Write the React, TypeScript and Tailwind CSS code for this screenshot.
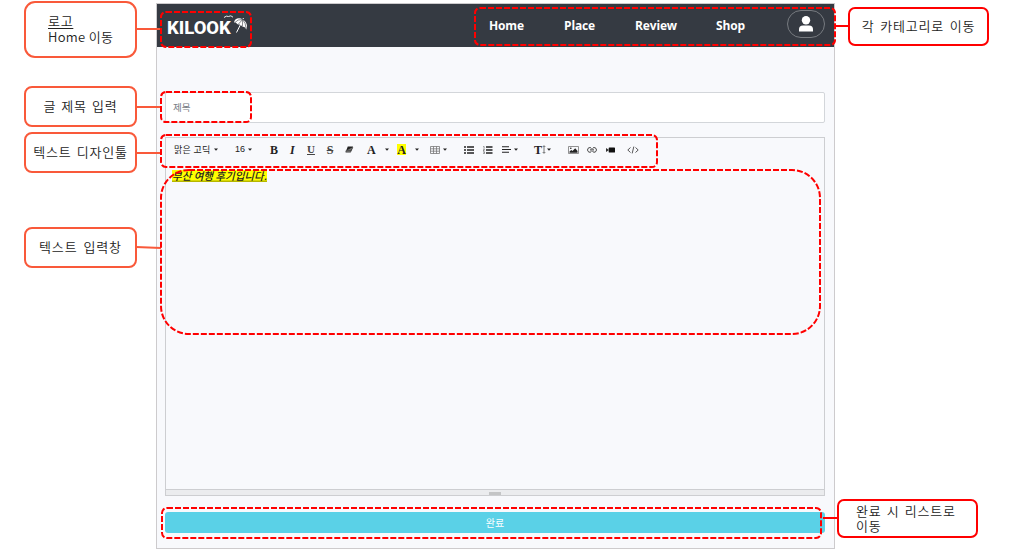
import type { ReactNode } from 'react';

const korean = "font-['Noto_Sans_CJK_KR',sans-serif]";

function Slot({ className, children }: { className: string; children: ReactNode }) {
  return <div className={`flex h-4 shrink-0 items-center ${className}`}>{children}</div>;
}

function Caret() {
  return (
    <svg className="shrink-0" width="4" height="3" viewBox="0 0 4 3">
      <path d="M0 .4h4L2 2.8z" fill="#222" />
    </svg>
  );
}

function Callout({ className, children }: { className: string; children: ReactNode }) {
  return (
    <div className={`absolute border-2 bg-white text-[13px] leading-4 font-[350] whitespace-nowrap text-[#222] ${className}`}>
      {children}
    </div>
  );
}

function Toolbar() {
  return (
    <div className="flex h-[23px] items-center pl-2 text-[#222]">
      <Slot className="w-[40px]"><span className="text-[9px] tracking-[0.3px] whitespace-nowrap">맑은 고딕</span></Slot>
      <Slot className="w-[21px]"><Caret /></Slot>
      <Slot className="w-[13px]"><span className="font-['Liberation_Sans',sans-serif] text-[9px]">16</span></Slot>
      <Slot className="w-[22px]"><Caret /></Slot>
      <Slot className="w-5 font-['Liberation_Serif',serif] text-[12px] font-bold">B</Slot>
      <Slot className="w-[17px] font-['Liberation_Serif',serif] text-[12px] font-bold italic">I</Slot>
      <Slot className="w-[19px] font-['Liberation_Serif',serif] text-[11px] font-bold text-[#444] underline">U</Slot>
      <Slot className="w-[19px] font-['Liberation_Serif',serif] text-[12px] font-bold text-[#444] line-through"><span className="w-2 text-center">S</span></Slot>
      <Slot className="w-[22px]">
        <svg width="9" height="7" viewBox="0 0 10 8">
          <path d="M3 .5h6L7.5 5H1.3z" fill="#222" />
          <path d="M1.2 5H7l1.8-3.6M1.2 5l-.5 2h5.6L7 5" fill="#777" stroke="#333" strokeWidth=".7" />
        </svg>
      </Slot>
      <Slot className="w-[18px] font-['Liberation_Serif',serif] text-[12px] font-bold">A</Slot>
      <Slot className="w-3"><Caret /></Slot>
      <Slot className="w-[18px] font-['Liberation_Serif',serif] text-[12px] font-bold">
        <span className="flex h-[11px] w-[9px] items-center justify-center bg-[#ffff00]">A</span>
      </Slot>
      <Slot className="w-[15px]"><Caret /></Slot>
      <Slot className="w-[13px]">
        <svg width="10" height="8" viewBox="0 0 10 8">
          <path d="M.5.5h9v7h-9zM.5 2.8h9M.5 5.2h9M3.5.5v7M6.5.5v7" fill="none" stroke="#777" strokeWidth=".8" />
        </svg>
      </Slot>
      <Slot className="w-[21px]"><Caret /></Slot>
      <Slot className="w-[19px]">
        <svg width="10" height="8" viewBox="0 0 10 8">
          <path d="M0 1h2M0 4h2M0 7h2M3 1h7M3 4h7M3 7h7" stroke="#222" strokeWidth="1.3" />
        </svg>
      </Slot>
      <Slot className="w-[19px]">
        <svg width="10" height="8" viewBox="0 0 10 8">
          <path d="M3 1h6.5M3 4h6.5M3 7h6.5" stroke="#222" strokeWidth="1.3" />
          <path d="M.3.5h.8v2M.2 3.3h1.2L.3 5h1.3M.2 6h1.2v1.6H.2" fill="none" stroke="#444" strokeWidth=".6" />
        </svg>
      </Slot>
      <Slot className="w-3">
        <svg width="9" height="7" viewBox="0 0 9 7">
          <path d="M0 .7h7M0 3.5h9M0 6.3h7" stroke="#222" strokeWidth="1.1" />
        </svg>
      </Slot>
      <Slot className="w-5"><Caret /></Slot>
      <Slot className="w-[13px] font-['Liberation_Serif',serif] text-[12px] font-bold">
        T
        <svg className="shrink-0" width="4" height="9" viewBox="0 0 4 9">
          <path d="M2 1v7M.7 2L2 .6 3.3 2M.7 7L2 8.4 3.3 7" fill="none" stroke="#444" strokeWidth=".7" />
        </svg>
      </Slot>
      <Slot className="w-[21px]"><Caret /></Slot>
      <Slot className="w-[19px]">
        <svg width="11" height="8" viewBox="0 0 11 8">
          <path d="M.5.5h10v7H.5z" fill="none" stroke="#777" strokeWidth=".8" />
          <path d="M1.5 6.7V5.5L3.3 4l1.2 1 2.7-2.7L9.5 5v1.7z" fill="#222" />
          <circle cx="2.8" cy="2.3" r=".8" fill="#222" />
        </svg>
      </Slot>
      <Slot className="w-[19px]">
        <svg width="10" height="6" viewBox="0 0 10 6">
          <path d="M4.5 1.5Q4 .6 2.8.6C-.1.6-.1 5.2 2.8 5.2q1.2 0 1.7-.9M5.5 1.5Q6 .6 7.2.6c2.9 0 2.9 4.6 0 4.6q-1.2 0-1.7-.9M3 2.9h4" fill="none" stroke="#333" />
        </svg>
      </Slot>
      <Slot className="w-[21px]">
        <svg width="9" height="6" viewBox="0 0 9 6">
          <rect x="2.7" y=".4" width="6.3" height="5.2" rx=".7" fill="#111" />
          <path d="M0 1l3 2-3 2z" fill="#333" />
        </svg>
      </Slot>
      <Slot className="w-3">
        <svg width="12" height="8" viewBox="0 0 12 8">
          <path d="M3.5 1.5L.8 4l2.7 2.5M8.5 1.5L11.2 4 8.5 6.5M6.8.6L5.2 7.4" fill="none" stroke="#444" strokeWidth=".9" />
        </svg>
      </Slot>
    </div>
  );
}

function Header() {
  return (
    <header className="flex h-[43px] shrink-0 items-start bg-[#353a42] text-white">
      <div className="flex h-[43px] w-[332px] pl-[10px]">
        <span className="mt-[14px] h-5 w-[65px] origin-left scale-x-[.97] font-['Roboto',sans-serif] text-[19px] leading-5 font-extrabold">KILOOK</span>
        <svg className="mt-[10px] -ml-2" width="26" height="24" viewBox="0 0 26 24">
          <path d="M0 3.5Q2.5 1.3 4.4 2.5 7 .8 9 3.2" fill="none" stroke="#fff" strokeWidth=".9" />
          <path d="M10 8.5C10.5 4.5 15 3 18.8 5.5 22.8 8 23.8 11.5 22.3 15.5 21 13 19.5 12.5 18.5 13 17 10.5 15.5 10.2 14 10.5 12.5 8.8 11 8.2 10 8.5z" fill="#fff" />
          <path d="M18.7 5.5l-4.5 4.8M18.7 5.5l-.3 7.3M18.7 5.5q-5-.5-8 3.2M18.7 5.5q3 3 3.4 9" fill="none" stroke="#353a42" strokeWidth=".6" />
          <path d="M16.8 10l-4.3 8.5M19 5l.5-1" stroke="#fff" strokeWidth="1" />
        </svg>
      </div>
      <nav className="flex h-[43px] items-center font-['Open_Sans',sans-serif] text-[12px] font-bold tracking-[-0.15px]">
        <a className="w-[75px]">Home</a>
        <a className="w-[71px]">Place</a>
        <a className="w-[81px]">Review</a>
        <a className="w-[71px]">Shop</a>
      </nav>
      <button className="mt-[6px] flex h-7 w-[38px] items-center justify-center rounded-full border border-[#777b80]">
        <svg width="14" height="16" viewBox="0 0 14 16">
          <circle cx="7" cy="4.3" r="4.2" fill="#fff" />
          <path d="M0 15.5v-2Q0 9.4 4 9.4h6q4 0 4 4.1v2z" fill="#fff" />
        </svg>
      </button>
    </header>
  );
}

export default function App() {
  return (
    <div className={`relative h-[551px] w-[1014px] overflow-hidden bg-white pt-[3px] pl-[156px] ${korean}`}>
      <main className="flex h-[546px] w-[679px] flex-col border border-[#cdcbcd] bg-[#f8f9fc]">
        <Header />
        <section className="flex flex-col pt-[45px] pr-[9px] pl-2">
          <div className="flex h-[31px] items-center rounded-[2px] border border-[#d3d6da] bg-white pb-px pl-[7px] text-[9.5px] text-[#777c85]">제목</div>
          <div className="mt-[14px] flex h-[359px] flex-col border border-[#cdced1]">
            <Toolbar />
            <div className="flex grow flex-col items-start pt-[9px] pl-[6px]">
              <span className="h-3 bg-[#ffff00] text-[10.5px] leading-3 font-medium whitespace-nowrap text-[#222] italic shadow-[inset_0_-1.5px_0_#b6b600]">부산 여행 후기입니다.</span>
            </div>
            <div className="flex h-[6px] items-end justify-center border-t border-[#cdced1] bg-[#ebecee]">
              <div className="h-[3px] w-3 bg-[#c4c5c6]" />
            </div>
          </div>
          <button className="mt-[16px] flex h-[21px] items-center justify-center rounded-[3px] bg-[#5ad1e7] text-[10px] text-white">완료</button>
        </section>
      </main>

      <svg className="absolute top-0 left-0" width="1014" height="551" viewBox="0 0 1014 551" fill="none" strokeWidth="2">
        <g stroke="#f9593a">
          <path d="M136 29h25M136 107h25M136 153h25M136 247l25 1" />
        </g>
        <path d="M835 26h14M823 518h15" stroke="#f00" />
        <g stroke="#f00" strokeDasharray="6 2">
          <rect x="161" y="12" width="90" height="35" rx="5" />
          <rect x="475" y="8" width="360" height="37" rx="5" />
          <rect x="161" y="92" width="90" height="30" rx="5" />
          <rect x="161" y="135" width="496" height="32" rx="5" />
          <rect x="161" y="170" width="659" height="164" rx="28" />
          <rect x="162" y="508" width="659" height="30" rx="5" />
        </g>
      </svg>

      <Callout className="top-px left-6 h-[57px] w-[113px] rounded-[11px] border-[#f9593a] pt-[10px] pl-[22px]">
        <div className="tracking-[0.7px] underline underline-offset-2">로고</div>
        <div className="tracking-[0.3px]">Home 이동</div>
      </Callout>
      <Callout className="top-[86px] left-6 flex h-[41px] w-[113px] items-center justify-center rounded-lg border-[#f9593a] pb-[2px] tracking-[0.8px] [word-spacing:1.5px]">글 제목 입력</Callout>
      <Callout className="top-[132px] left-6 flex h-[41px] w-[113px] items-center justify-center rounded-lg border-[#f9593a] pb-[2px] tracking-[0.8px] [word-spacing:1.5px]">텍스트 디자인툴</Callout>
      <Callout className="top-[227px] left-6 flex h-[41px] w-[113px] items-center justify-center rounded-lg border-[#f9593a] pb-[2px] tracking-[0.8px] [word-spacing:2.5px]">텍스트 입력창</Callout>
      <Callout className="top-[7px] left-[848px] flex h-[39px] w-[141px] items-center justify-center rounded-[7px] border-[#f00] pb-px tracking-[0.8px] [word-spacing:2px]">각 카테고리로 이동</Callout>
      <Callout className="top-[499px] left-[837px] h-[39px] w-[141px] rounded-[7px] border-[#f00] pt-[2px] pl-[17px] leading-[15px] tracking-[0.8px] [word-spacing:1.5px]">
        <div>완료 시 리스트로</div>
        <div>이동</div>
      </Callout>
    </div>
  );
}
